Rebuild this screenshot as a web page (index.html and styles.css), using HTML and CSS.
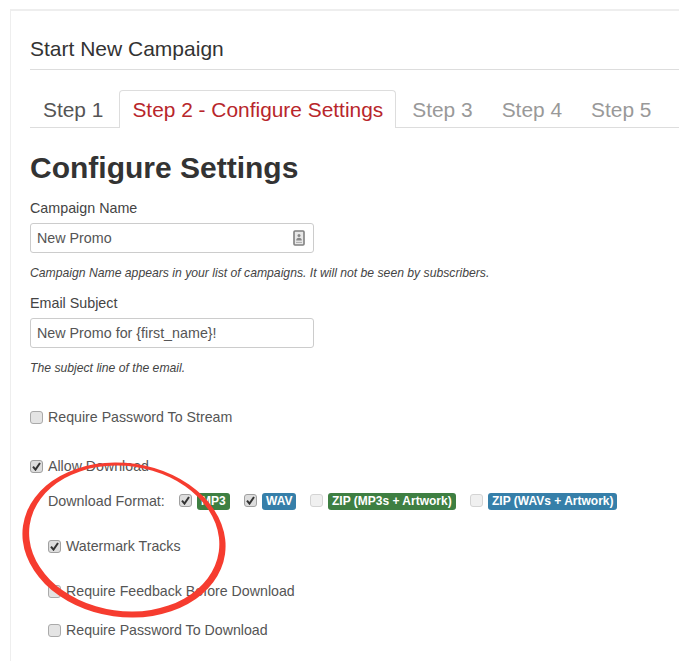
FILE: index.html
```html
<!DOCTYPE html>
<html lang="en">
<head>
<meta charset="utf-8">
<title>Start New Campaign</title>
<link rel="stylesheet" href="styles.css">
</head>
<body>
<main class="card">
  <h3 class="title">Start New Campaign</h3>
  <nav class="tabs">
    <a class="tab done">Step 1</a>
    <a class="tab active">Step 2 - Configure Settings</a>
    <a class="tab">Step 3</a>
    <a class="tab">Step 4</a>
    <a class="tab">Step 5</a>
  </nav>
  <h1 class="heading">Configure Settings</h1>

  <div class="field">
    <label class="label">Campaign Name</label>
    <div class="input">New Promo
      <svg class="input-icon" width="12" height="16" viewBox="0 0 12 16"><rect x="1" y="1" width="10" height="14" rx="1" fill="#e8e8e8" stroke="#808080" stroke-width="1.6"/><circle cx="6" cy="5.6" r="1.5" fill="#888"/><path d="M3.2 10.5c0-2 1-2.8 2.8-2.8s2.8.8 2.8 2.8z" fill="#888"/><path d="M3 12.4h6" stroke="#aaa"/></svg>
    </div>
    <p class="help">Campaign Name appears in your list of campaigns. It will not be seen by subscribers.</p>
  </div>

  <div class="field second">
    <label class="label">Email Subject</label>
    <div class="input">New Promo for {first_name}!</div>
    <p class="help">The subject line of the email.</p>
  </div>

  <div class="check-row stream"><span class="box"></span>Require Password To Stream</div>
  <div class="check-row allow"><span class="box on"><svg width="9" height="9" viewBox="0 0 9 9"><path d="M1 4.6l2.5 3L8 1" fill="none" stroke="#333" stroke-width="2"/></svg></span>Allow Download</div>

  <div class="options">
    <div class="formats">
      <span class="formats-label">Download Format:</span>
      <span class="format f1"><span class="box on"><svg width="9" height="9" viewBox="0 0 9 9"><path d="M1 4.6l2.5 3L8 1" fill="none" stroke="#333" stroke-width="2"/></svg></span><span class="badge green">MP3</span></span>
      <span class="format f2"><span class="box on"><svg width="9" height="9" viewBox="0 0 9 9"><path d="M1 4.6l2.5 3L8 1" fill="none" stroke="#333" stroke-width="2"/></svg></span><span class="badge blue">WAV</span></span>
      <span class="format f3"><span class="box faint"></span><span class="badge green">ZIP (MP3s + Artwork)</span></span>
      <span class="format f4"><span class="box faint"></span><span class="badge blue">ZIP (WAVs + Artwork)</span></span>
    </div>
    <div class="check-row watermark"><span class="box on"><svg width="9" height="9" viewBox="0 0 9 9"><path d="M1 4.6l2.5 3L8 1" fill="none" stroke="#333" stroke-width="2"/></svg></span>Watermark Tracks</div>
    <div class="check-row feedback"><span class="box"></span>Require Feedback Before Download</div>
    <div class="check-row dlpass"><span class="box"></span>Require Password To Download</div>
  </div>
</main>
<svg class="circle" width="240" height="170" viewBox="0 0 240 170">
  <path transform="rotate(8 112 78)" fill="#f63c2f" fill-rule="evenodd" d="M10 78a102 77 0 1 0 204 0a102 77 0 1 0-204 0ZM16.5 76.5a95.5 72.5 0 1 0 191 0a95.5 72.5 0 1 0-191 0Z"/>
</svg>
</body>
</html>
```
FILE: styles.css
```css
* { box-sizing: border-box; }
html, body { margin: 0; width: 679px; height: 661px; overflow: hidden; background: #fff; }
body { position: relative; font-family: "Liberation Sans", Arial, sans-serif; color: #333; font-size: 14px; }
.card { width: 669px; height: 652px; margin: 9px 0 0 10px; padding: 20px 0 0 19px; border-style: solid; border-color: #eee; border-width: 2px 0 0 1px; overflow: hidden; }
.title { margin: 7px 0 0; padding-bottom: 9px; font-size: 21px; line-height: 22px; font-weight: 400; border-bottom: 1px solid #ddd; height: 32px; }
.tabs { display: flex; margin-top: 20px; height: 38px; border-bottom: 1px solid #ddd; font-size: 20.9px; }
.tab { padding: 0 12px; line-height: 37px; height: 38px; color: #999; margin-right: 3px; border: 1px solid transparent; border-bottom: 0; }
.tab.done { color: #555; }
.tab.active { color: #b8262b; background: #fff; border-color: #ddd; border-radius: 4px 4px 0 0; }
.heading { margin: 20px 0 0; font-size: 30px; line-height: 40px; font-weight: 700; color: #333; }
.field { margin-top: 12px; }
.field.second { margin-top: 15px; }
.label { display: block; line-height: 16px; color: #444; font-size: 14.3px; }
.input { position: relative; width: 284px; height: 30px; margin-top: 7px; padding: 0 6px; line-height: 28px; border: 1px solid #ccc; border-radius: 3px; color: #555; font-size: 14.3px; }
.input-icon { position: absolute; right: 8px; top: 6px; }
.help { margin: 13px 0 0; font-size: 12.2px; line-height: 14px; font-style: italic; color: #444; }
.check-row { display: flex; align-items: center; height: 18px; color: #555; font-size: 14.2px; }
.stream { margin-top: 33px; }
.allow { margin-top: 31px; }
.box { flex: none; width: 13px; height: 13px; margin-right: 5px; display: flex; align-items: center; justify-content: center; border: 1px solid #aaa; border-radius: 3px; background: #e4e4e4; }
.box.on { background: #ddd; border-color: #a0a0a0; }
.box.faint { background: #f0f0f0; border-color: #d4d4d4; }
.options { margin-left: 18px; }
.formats { display: flex; align-items: center; height: 18px; margin-top: 17px; color: #555; font-size: 14.3px; }
.formats-label { width: 131px; }
.format { display: flex; align-items: center; }
.format .box { position: relative; top: -1px; }
.f1 { width: 65px; }
.f2 { width: 66px; }
.f3 { width: 160px; }
.badge { height: 17px; padding: 0 4px; line-height: 16px; border-radius: 3px; color: #fff; font-size: 12px; font-weight: 700; }
.green { background: #3e7f42; }
.blue { background: #367fa9; }
.watermark { margin-top: 27px; }
.feedback { margin-top: 27px; }
.dlpass { margin-top: 21px; }
.circle { position: absolute; left: 12px; top: 462px; }
```
